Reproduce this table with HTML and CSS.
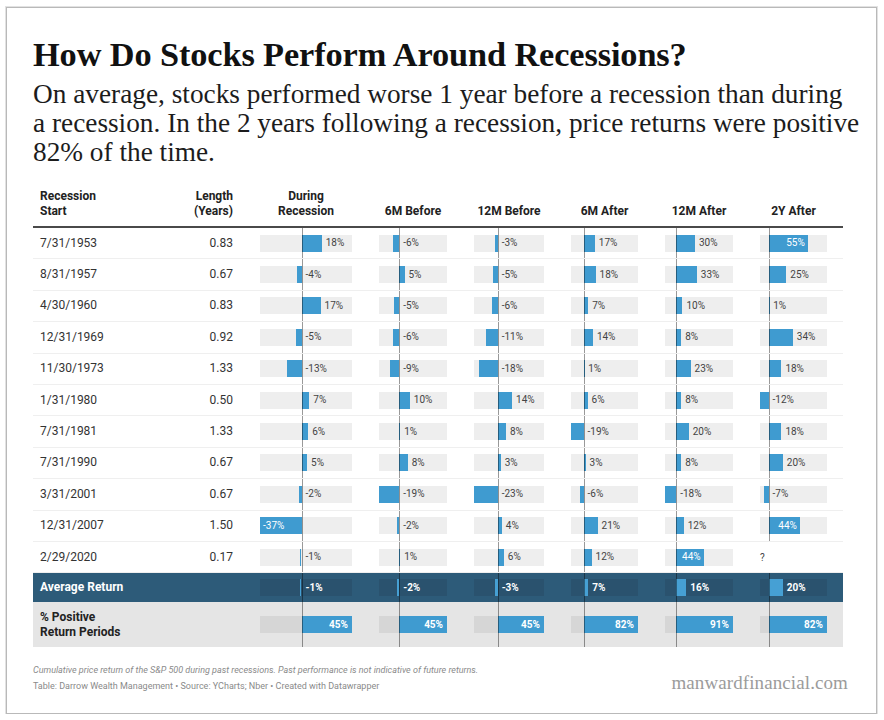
FILE: index.html
```html
<!DOCTYPE html>
<html lang="en">
<head>
<meta charset="utf-8">
<title>How Do Stocks Perform Around Recessions?</title>
<link rel="stylesheet" href="styles.css">
</head>
<body>
<div class="frame">
  <h1 class="title">How Do Stocks Perform Around Recessions?</h1>
  <p class="subtitle">On average, stocks performed worse 1 year before a recession than during<br>a recession. In the 2 years following a recession, price returns were positive<br>82% of the time.</p>

  <div class="table">
    <div class="row head">
      <div class="h left">Recession<br>Start</div>
      <div class="h right">Length<br>(Years)</div>
      <div class="h center">During<br>Recession</div>
      <div class="h center">6M Before</div>
      <div class="h center">12M Before</div>
      <div class="h center">6M After</div>
      <div class="h center">12M After</div>
      <div class="h center">2Y After</div>
    </div>

    <div class="row data">
      <div class="t">7/31/1953</div><div class="t num">0.83</div>
      <div class="cell" style="--v:18"><div class="track"><span class="bar"></span><span class="lbl">18%</span></div></div>
      <div class="cell" style="--v:-6"><div class="track"><span class="bar"></span><span class="lbl">-6%</span></div></div>
      <div class="cell" style="--v:-3"><div class="track"><span class="bar"></span><span class="lbl">-3%</span></div></div>
      <div class="cell" style="--v:17"><div class="track"><span class="bar"></span><span class="lbl">17%</span></div></div>
      <div class="cell" style="--v:30"><div class="track"><span class="bar"></span><span class="lbl">30%</span></div></div>
      <div class="cell" style="--v:55"><div class="track"><span class="bar in"><span class="lbl">55%</span></span></div></div>
    </div>
    <div class="row data">
      <div class="t">8/31/1957</div><div class="t num">0.67</div>
      <div class="cell" style="--v:-4"><div class="track"><span class="bar"></span><span class="lbl">-4%</span></div></div>
      <div class="cell" style="--v:5"><div class="track"><span class="bar"></span><span class="lbl">5%</span></div></div>
      <div class="cell" style="--v:-5"><div class="track"><span class="bar"></span><span class="lbl">-5%</span></div></div>
      <div class="cell" style="--v:18"><div class="track"><span class="bar"></span><span class="lbl">18%</span></div></div>
      <div class="cell" style="--v:33"><div class="track"><span class="bar"></span><span class="lbl">33%</span></div></div>
      <div class="cell" style="--v:25"><div class="track"><span class="bar"></span><span class="lbl">25%</span></div></div>
    </div>
    <div class="row data">
      <div class="t">4/30/1960</div><div class="t num">0.83</div>
      <div class="cell" style="--v:17"><div class="track"><span class="bar"></span><span class="lbl">17%</span></div></div>
      <div class="cell" style="--v:-5"><div class="track"><span class="bar"></span><span class="lbl">-5%</span></div></div>
      <div class="cell" style="--v:-6"><div class="track"><span class="bar"></span><span class="lbl">-6%</span></div></div>
      <div class="cell" style="--v:7"><div class="track"><span class="bar"></span><span class="lbl">7%</span></div></div>
      <div class="cell" style="--v:10"><div class="track"><span class="bar"></span><span class="lbl">10%</span></div></div>
      <div class="cell" style="--v:1"><div class="track"><span class="bar"></span><span class="lbl">1%</span></div></div>
    </div>
    <div class="row data">
      <div class="t">12/31/1969</div><div class="t num">0.92</div>
      <div class="cell" style="--v:-5"><div class="track"><span class="bar"></span><span class="lbl">-5%</span></div></div>
      <div class="cell" style="--v:-6"><div class="track"><span class="bar"></span><span class="lbl">-6%</span></div></div>
      <div class="cell" style="--v:-11"><div class="track"><span class="bar"></span><span class="lbl">-11%</span></div></div>
      <div class="cell" style="--v:14"><div class="track"><span class="bar"></span><span class="lbl">14%</span></div></div>
      <div class="cell" style="--v:8"><div class="track"><span class="bar"></span><span class="lbl">8%</span></div></div>
      <div class="cell" style="--v:34"><div class="track"><span class="bar"></span><span class="lbl">34%</span></div></div>
    </div>
    <div class="row data">
      <div class="t">11/30/1973</div><div class="t num">1.33</div>
      <div class="cell" style="--v:-13"><div class="track"><span class="bar"></span><span class="lbl">-13%</span></div></div>
      <div class="cell" style="--v:-9"><div class="track"><span class="bar"></span><span class="lbl">-9%</span></div></div>
      <div class="cell" style="--v:-18"><div class="track"><span class="bar"></span><span class="lbl">-18%</span></div></div>
      <div class="cell" style="--v:1"><div class="track"><span class="bar"></span><span class="lbl">1%</span></div></div>
      <div class="cell" style="--v:23"><div class="track"><span class="bar"></span><span class="lbl">23%</span></div></div>
      <div class="cell" style="--v:18"><div class="track"><span class="bar"></span><span class="lbl">18%</span></div></div>
    </div>
    <div class="row data">
      <div class="t">1/31/1980</div><div class="t num">0.50</div>
      <div class="cell" style="--v:7"><div class="track"><span class="bar"></span><span class="lbl">7%</span></div></div>
      <div class="cell" style="--v:10"><div class="track"><span class="bar"></span><span class="lbl">10%</span></div></div>
      <div class="cell" style="--v:14"><div class="track"><span class="bar"></span><span class="lbl">14%</span></div></div>
      <div class="cell" style="--v:6"><div class="track"><span class="bar"></span><span class="lbl">6%</span></div></div>
      <div class="cell" style="--v:8"><div class="track"><span class="bar"></span><span class="lbl">8%</span></div></div>
      <div class="cell" style="--v:-12"><div class="track"><span class="bar"></span><span class="lbl">-12%</span></div></div>
    </div>
    <div class="row data">
      <div class="t">7/31/1981</div><div class="t num">1.33</div>
      <div class="cell" style="--v:6"><div class="track"><span class="bar"></span><span class="lbl">6%</span></div></div>
      <div class="cell" style="--v:1"><div class="track"><span class="bar"></span><span class="lbl">1%</span></div></div>
      <div class="cell" style="--v:8"><div class="track"><span class="bar"></span><span class="lbl">8%</span></div></div>
      <div class="cell" style="--v:-19"><div class="track"><span class="bar"></span><span class="lbl">-19%</span></div></div>
      <div class="cell" style="--v:20"><div class="track"><span class="bar"></span><span class="lbl">20%</span></div></div>
      <div class="cell" style="--v:18"><div class="track"><span class="bar"></span><span class="lbl">18%</span></div></div>
    </div>
    <div class="row data">
      <div class="t">7/31/1990</div><div class="t num">0.67</div>
      <div class="cell" style="--v:5"><div class="track"><span class="bar"></span><span class="lbl">5%</span></div></div>
      <div class="cell" style="--v:8"><div class="track"><span class="bar"></span><span class="lbl">8%</span></div></div>
      <div class="cell" style="--v:3"><div class="track"><span class="bar"></span><span class="lbl">3%</span></div></div>
      <div class="cell" style="--v:3"><div class="track"><span class="bar"></span><span class="lbl">3%</span></div></div>
      <div class="cell" style="--v:8"><div class="track"><span class="bar"></span><span class="lbl">8%</span></div></div>
      <div class="cell" style="--v:20"><div class="track"><span class="bar"></span><span class="lbl">20%</span></div></div>
    </div>
    <div class="row data">
      <div class="t">3/31/2001</div><div class="t num">0.67</div>
      <div class="cell" style="--v:-2"><div class="track"><span class="bar"></span><span class="lbl">-2%</span></div></div>
      <div class="cell" style="--v:-19"><div class="track"><span class="bar"></span><span class="lbl">-19%</span></div></div>
      <div class="cell" style="--v:-23"><div class="track"><span class="bar"></span><span class="lbl">-23%</span></div></div>
      <div class="cell" style="--v:-6"><div class="track"><span class="bar"></span><span class="lbl">-6%</span></div></div>
      <div class="cell" style="--v:-18"><div class="track"><span class="bar"></span><span class="lbl">-18%</span></div></div>
      <div class="cell" style="--v:-7"><div class="track"><span class="bar"></span><span class="lbl">-7%</span></div></div>
    </div>
    <div class="row data">
      <div class="t">12/31/2007</div><div class="t num">1.50</div>
      <div class="cell" style="--v:-37"><div class="track"><span class="bar in neg"><span class="lbl">-37%</span></span></div></div>
      <div class="cell" style="--v:-2"><div class="track"><span class="bar"></span><span class="lbl">-2%</span></div></div>
      <div class="cell" style="--v:4"><div class="track"><span class="bar"></span><span class="lbl">4%</span></div></div>
      <div class="cell" style="--v:21"><div class="track"><span class="bar"></span><span class="lbl">21%</span></div></div>
      <div class="cell" style="--v:12"><div class="track"><span class="bar"></span><span class="lbl">12%</span></div></div>
      <div class="cell" style="--v:44"><div class="track"><span class="bar in"><span class="lbl">44%</span></span></div></div>
    </div>
    <div class="row data">
      <div class="t">2/29/2020</div><div class="t num">0.17</div>
      <div class="cell" style="--v:-1"><div class="track"><span class="bar"></span><span class="lbl">-1%</span></div></div>
      <div class="cell" style="--v:1"><div class="track"><span class="bar"></span><span class="lbl">1%</span></div></div>
      <div class="cell" style="--v:6"><div class="track"><span class="bar"></span><span class="lbl">6%</span></div></div>
      <div class="cell" style="--v:12"><div class="track"><span class="bar"></span><span class="lbl">12%</span></div></div>
      <div class="cell" style="--v:44"><div class="track"><span class="bar in"><span class="lbl">44%</span></span></div></div>
      <div class="cell empty"><span class="q">?</span></div>
    </div>

    <div class="row avg">
      <div class="t strong">Average Return</div><div class="t num"></div>
      <div class="cell" style="--v:-1"><div class="track"><span class="bar"></span><span class="lbl">-1%</span></div></div>
      <div class="cell" style="--v:-2"><div class="track"><span class="bar"></span><span class="lbl">-2%</span></div></div>
      <div class="cell" style="--v:-3"><div class="track"><span class="bar"></span><span class="lbl">-3%</span></div></div>
      <div class="cell" style="--v:7"><div class="track"><span class="bar"></span><span class="lbl">7%</span></div></div>
      <div class="cell" style="--v:16"><div class="track"><span class="bar"></span><span class="lbl">16%</span></div></div>
      <div class="cell" style="--v:20"><div class="track"><span class="bar"></span><span class="lbl">20%</span></div></div>
    </div>
    <div class="row pos">
      <div class="t strong">% Positive<br>Return Periods</div><div class="t num"></div>
      <div class="cell" style="--v:45"><div class="track"><span class="bar in"><span class="lbl">45%</span></span></div></div>
      <div class="cell" style="--v:45"><div class="track"><span class="bar in"><span class="lbl">45%</span></span></div></div>
      <div class="cell" style="--v:45"><div class="track"><span class="bar in"><span class="lbl">45%</span></span></div></div>
      <div class="cell" style="--v:82"><div class="track"><span class="bar in"><span class="lbl">82%</span></span></div></div>
      <div class="cell" style="--v:91"><div class="track"><span class="bar in"><span class="lbl">91%</span></span></div></div>
      <div class="cell" style="--v:82"><div class="track"><span class="bar in"><span class="lbl">82%</span></span></div></div>
    </div>
  </div>

  <div class="footer">
    <div class="notes">
      <p class="note">Cumulative price return of the S&amp;P 500 during past recessions. Past performance is not indicative of future returns.</p>
      <p class="source">Table: Darrow Wealth Management • Source: YCharts; Nber • Created with Datawrapper</p>
    </div>
    <div class="brand">manwardfinancial.com</div>
  </div>
</div>
</body>
</html>
```

FILE: styles.css
```css
html, body {
  margin: 0;
  padding: 0;
  background: #ffffff;
}

.frame {
  box-sizing: border-box;
  width: 871px;
  height: 707px;
  margin: 7px 0 0 6px;
  border: 1px solid #b9b9b9;
  box-shadow: 0 0 0 1px #e2e2e2;
  padding: 28px 33px 0 26px;
}

.title {
  margin: 0;
  font-family: "Liberation Serif", serif;
  font-weight: bold;
  font-size: 34.3px;
  line-height: 36px;
  color: #111;
  letter-spacing: -0.1px;
}

.subtitle {
  margin: 8px 0 0 0;
  font-family: "Liberation Serif", serif;
  font-size: 27.3px;
  line-height: 29px;
  color: #1c1c1c;
  white-space: nowrap;
}

.table {
  margin-top: 22px;
  font-family: Roboto, "Liberation Sans", sans-serif;
  font-size: 12px;
  color: #333;
}

.row {
  display: grid;
  grid-template-columns: 106px 60px 92px 68px 70px 67px 68px 67px;
  column-gap: 27px;
  padding: 0 15px 0 7px;
  box-sizing: border-box;
}

.head {
  align-items: end;
  padding-bottom: 7px;
  border-bottom: 2px solid #4a4a4a;
  font-weight: bold;
  color: #222;
  line-height: 15px;
}

.h.right { text-align: right; }
.h.center { text-align: center; }

.data {
  height: 31.4px;
  border-bottom: 1px solid #efefef;
  align-items: center;
}

.t {
  line-height: 15px;
  align-self: center;
}

.t.num { text-align: right; }
.t.strong { font-weight: bold; }

.row > .cell:nth-child(3) { --min: -37; --range: 82; }
.row > .cell:nth-child(4) { --min: -19; --range: 64; }
.row > .cell:nth-child(5) { --min: -23; --range: 68; }
.row > .cell:nth-child(6) { --min: -19; --range: 101; }
.row > .cell:nth-child(7) { --min: -18; --range: 109; }
.row > .cell:nth-child(8) { --min: -12; --range: 94; }

.cell {
  position: relative;
  align-self: stretch;
  display: flex;
  align-items: center;
}

.cell::after {
  content: "";
  position: absolute;
  top: 0;
  bottom: 0;
  left: calc(-1 * var(--min) / var(--range) * 100%);
  width: 1px;
  background: rgba(0, 0, 0, 0.4);
}

.cell.empty::after { display: none; }

.q {
  font-size: 10px;
  color: #444;
}

.track {
  flex: 1;
  display: flex;
  align-items: center;
  height: 17px;
  background: #eeeeee;
}

.bar {
  flex: none;
  box-sizing: border-box;
  height: 100%;
  display: flex;
  align-items: center;
  background: #3f9bd0;
  margin-left: calc((min(var(--v), 0) - var(--min)) / var(--range) * 100%);
  width: calc(max(var(--v), -1 * var(--v)) / var(--range) * 100%);
}

.lbl {
  margin-left: 4px;
  font-size: 10px;
  line-height: 12px;
  color: #444;
  white-space: nowrap;
}

.bar.in {
  justify-content: flex-end;
  padding-right: 3px;
}

.bar.in.neg {
  justify-content: flex-start;
  padding-right: 0;
  padding-left: 3px;
}

.bar .lbl {
  margin-left: 0;
  color: #ffffff;
}

.avg {
  height: 29px;
  align-items: center;
  background: #2d5b79;
  color: #ffffff;
}

.avg .track { background: #2a526e; }
.avg .bar { background: #46a0d4; }
.avg .lbl { color: #ffffff; font-weight: bold; }

.pos {
  height: 45px;
  align-items: center;
  background: #e5e5e5;
  color: #222;
}

.pos .track { background: #d6d6d6; }
.pos .lbl { font-weight: bold; }
.pos .bar.in { padding-right: 4px; }

.footer {
  display: flex;
  justify-content: space-between;
  align-items: flex-end;
  margin-top: 15px;
  margin-right: -5px;
}

.note, .source {
  margin: 0;
  font-family: Roboto, "Liberation Sans", sans-serif;
  font-size: 9px;
  line-height: 16px;
  color: #8a8a8a;
}

.note { font-style: italic; }

.brand {
  font-family: "Liberation Serif", serif;
  font-size: 19px;
  line-height: 22px;
  color: #9b9b9b;
  letter-spacing: 0.1px;
}
```
